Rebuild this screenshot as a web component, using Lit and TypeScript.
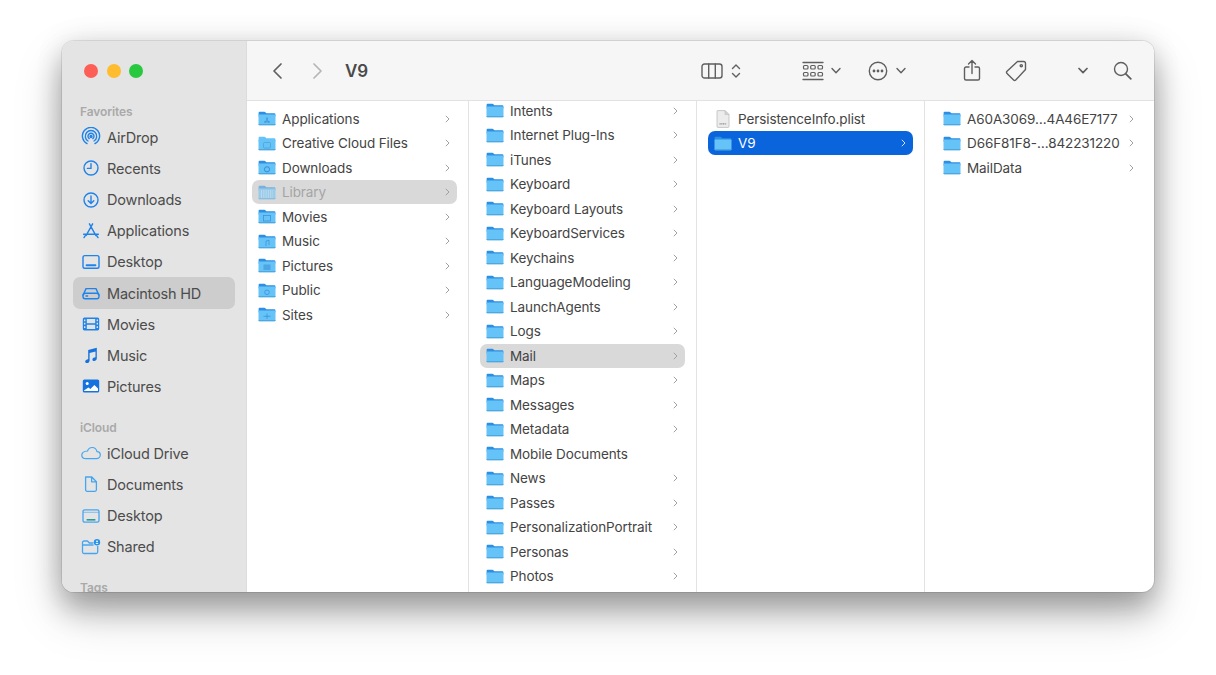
import { LitElement, html, css, svg } from "lit";
import { customElement } from "lit/decorators.js";

const B = "#1f83ea";
const si = (body: unknown) => html`<svg class="sico" viewBox="0 0 20 20" fill="none" stroke="${B}" stroke-width="1.4" stroke-linecap="round" stroke-linejoin="round">${body}</svg>`;

const sidebarIcons: Record<string, unknown> = {
  airdrop: si(svg`<path d="M6 16.6a8.6 8.6 0 1 1 8 0"/><path d="M7 14a5.7 5.7 0 1 1 6 0"/><path d="M8.2 11.6a3 3 0 1 1 3.6 0"/><circle cx="10" cy="9.5" r="1" fill="${B}"/>`),
  recents: si(svg`<circle cx="10" cy="10" r="7" /><path d="M10 5.6V10.4H6.4"/>`),
  downloads: si(svg`<circle cx="10" cy="10" r="7"/><path d="M10 6v7.4M7.2 10.8 10 13.6l2.8-2.8"/>`),
  applications: si(svg`<path d="M11.6 2.8 5.2 14.4M8.4 2.8l6.4 11.6M2.6 13.2h14.8M3 16.6l1.6-2.4M17 16.6l-1.6-2.4"/>`),
  desktop: si(svg`<rect x="2" y="3.6" width="16" height="12.6" rx="1.8"/><path d="M5.6 13.2h8.8" stroke-width="2"/>`),
  hd: si(svg`<path d="M2.2 12 5 5.6h10l2.8 6.4"/><rect x="2" y="10.2" width="16" height="5.6" rx="2.2"/><path d="M5 13h1.6"/>`),
  movies: html`<svg class="sico" viewBox="0 0 20 20"><path fill="${B}" fill-rule="evenodd" d="M3.4 3.6h13.2A1.6 1.6 0 0 1 18.2 5.2v9.6a1.6 1.6 0 0 1-1.6 1.6H3.4a1.6 1.6 0 0 1-1.6-1.6V5.2a1.6 1.6 0 0 1 1.6-1.6ZM5.8 5v4.2h8.4V5Zm0 5.8V15h8.4v-4.2ZM3 5.4v1.8h1.4V5.4Zm0 3.4v1.8h1.4V8.8Zm0 3.4V14h1.4v-1.8Zm12.6-6.8v1.8H17V5.4Zm0 3.4v1.8H17V8.8Zm0 3.4V14H17v-1.8Z"/></svg>`,
  music: html`<svg class="sico" viewBox="0 0 20 20"><path fill="#1572de" d="M7.2 5 15.8 2.8v10.8c0 1.6-1.3 2.5-2.6 2.5-1 0-1.8-.6-1.8-1.6 0-1.2 1-1.8 2-2l1.1-.3V6.4L8.6 7.9v7.6c0 1.6-1.3 2.6-2.6 2.6-1 0-1.8-.7-1.8-1.7 0-1.2 1-1.8 2-2l1-.3Z"/></svg>`,
  pictures: html`<svg class="sico" viewBox="0 0 20 20"><path fill="#1572de" d="M3.4 3.4h13.2a1.6 1.6 0 0 1 1.6 1.6v10a1.6 1.6 0 0 1-1.6 1.6H3.4A1.6 1.6 0 0 1 1.8 15V5a1.6 1.6 0 0 1 1.6-1.6Z"/><path fill="#fff" d="M3 14.6v.4h14v-2.4l-3.6-3.6-4 4-2-1.6Z"/><circle cx="6.2" cy="7.4" r="1.5" fill="#fff"/></svg>`,
  cloud: html`<svg class="sico" viewBox="0 0 20 20" fill="none" stroke="#45a5ee" stroke-width="1.2" stroke-linejoin="round"><path d="M5 15.6h10.4c2.2 0 3.9-1.6 3.9-3.5s-1.5-3.3-3.3-3.4C15.4 6 13.5 4.5 11.2 4.5 8.9 4.5 7.2 6 6.5 8 3.3 8.2.8 9.8.8 12.2c0 2 1.8 3.4 4.2 3.4Z"/></svg>`,
  docs: html`<svg class="sico" viewBox="0 0 20 20" fill="none" stroke="#45a5ee" stroke-width="1.3" stroke-linejoin="round"><path d="M4.6 3h6.2l4.6 4.8v8a1.5 1.5 0 0 1-1.5 1.5H6.1a1.5 1.5 0 0 1-1.5-1.5ZM10.6 3v4.8h4.8"/></svg>`,
  desktop2: html`<svg class="sico" viewBox="0 0 20 20" fill="none" stroke="#45a5ee" stroke-width="1.3"><rect x="2" y="3.8" width="16" height="12.4" rx="1.8"/><path d="M2.5 6.4h15" stroke-dasharray="1 1"/><path d="M5.6 13.8h8.8" stroke="#2c9a8f" stroke-width="1.6"/></svg>`,
  shared: html`<svg class="sico" viewBox="0 0 20 20" fill="none" stroke="#45a5ee" stroke-width="1.3" stroke-linejoin="round"><path d="M1.5 5.6V15a1.5 1.5 0 0 0 1.5 1.5h12.2a1.5 1.5 0 0 0 1.5-1.5V9M1.5 8h11M1.5 5.6a1.6 1.6 0 0 1 1.6-1.6h3.4l1.8 2h4"/><circle cx="16" cy="5.2" r="3.2" fill="#2a93e8" stroke="none"/><circle cx="16" cy="4.3" r=".9" fill="#fff" stroke="none"/><path d="M14.5 7a1.6 1.6 0 0 1 3 0Z" fill="#fff" stroke="none"/></svg>`,
};

type SB = { n: string; i: string; sel?: boolean };
const favorites: SB[] = [
  { n: "AirDrop", i: "airdrop" }, { n: "Recents", i: "recents" }, { n: "Downloads", i: "downloads" },
  { n: "Applications", i: "applications" }, { n: "Desktop", i: "desktop" }, { n: "Macintosh HD", i: "hd", sel: true },
  { n: "Movies", i: "movies" }, { n: "Music", i: "music" }, { n: "Pictures", i: "pictures" },
];
const icloud: SB[] = [
  { n: "iCloud Drive", i: "cloud" }, { n: "Documents", i: "docs" }, { n: "Desktop", i: "desktop2" }, { n: "Shared", i: "shared" },
];

const glyphs: Record<string, unknown> = {
  a: svg`<path d="M9.8 6.5 7 12M8.2 6.5 11 12M6 10.8h6" fill="none" stroke="#3c92d6" stroke-width=".8"/>`,
  c: svg`<rect x="5.5" y="6.5" width="7" height="5.5" rx="1" fill="none" stroke="#4fa0d8" stroke-width=".8"/>`,
  d: svg`<circle cx="9" cy="9.3" r="2.6" fill="none" stroke="#2f86cc" stroke-width=".9"/>`,
  l: svg`<path d="M3 6h12M3 8h12M3 10h12M3 12h12" stroke="#fff" stroke-width=".8" stroke-dasharray="1 1.3"/>`,
  m: svg`<rect x="5.5" y="6.5" width="7" height="5.5" fill="none" stroke="#3c92d6" stroke-width=".8"/>`,
  n: svg`<path d="M8 12V7l3-.7V11" fill="none" stroke="#3c92d6" stroke-width=".8"/>`,
  p: svg`<rect x="5.5" y="6.5" width="7" height="5.5" fill="#3c92d6" opacity=".6"/>`,
  u: svg`<circle cx="9" cy="9.3" r="2.3" fill="none" stroke="#3c92d6" stroke-width=".8"/>`,
  s: svg`<path d="M5.5 9.3h7M9 6.5v5.5" stroke="#3c92d6" stroke-width=".8"/>`,
};

const folder = (g?: string, faded = false) => html`<svg class="folder ${faded ? "faded" : ""}" viewBox="0 0 18 15">
  <path fill="${g === "c" ? "#66c3f8" : "#2d8fe3"}" d="M1.5.8h4.8c.6 0 .9.2 1.3.6l.9.9h8c.5 0 .9.4.9.9v2.200H.6V1.700c0-.5.4-.9.9-.9Z"/>
  <path fill="#66c3f8" d="M1.3 3.400h15.400c.5 0 .8.3.8.8v9c0 .6-.4 1-1 1H1.500c-.6 0-1-.4-1-1v-9c0-.5.3-.8.8-.8Z"/>
  <path fill="#4fa7dc" d="M.5 12.900h17v.4c0 .6-.4.9-1 .9H1.500c-.6 0-1-.3-1-.9Z"/>
  ${g ? glyphs[g] : ""}
</svg>`;

const fileIcon = html`<svg class="folder file" viewBox="0 0 18 18" fill="none">
  <path fill="#ececec" stroke="#bdbdbd" stroke-width=".8" d="M3.500.6H11l4 4v12c0 .5-.3.8-.8.8H3.800c-.5 0-.8-.3-.8-.8V1.100c0-.3.2-.5.5-.5Z"/>
  <path fill="#d4d4d4" stroke="#bdbdbd" stroke-width=".6" d="M11 .6v4h4Z"/>
  <path stroke="#8f8f8f" stroke-width="1.2" stroke-dasharray="1.2 .5" d="M5.500 13.800h7"/>
</svg>`;

type Row = { n: string; g?: string; chev?: boolean; sel?: "gray" | "blue"; faded?: boolean; file?: boolean };
const col1: Row[] = [
  { n: "Applications", g: "a" }, { n: "Creative Cloud Files", g: "c" }, { n: "Downloads", g: "d" },
  { n: "Library", g: "l", sel: "gray", faded: true }, { n: "Movies", g: "m" }, { n: "Music", g: "n" },
  { n: "Pictures", g: "p" }, { n: "Public", g: "u" }, { n: "Sites", g: "s" },
].map((r) => ({ ...r, chev: true })) as Row[];
const col2: Row[] = [
  "Intents", "Internet Plug-Ins", "iTunes", "Keyboard", "Keyboard Layouts", "KeyboardServices", "Keychains",
  "LanguageModeling", "LaunchAgents", "Logs", "Mail", "Maps", "Messages", "Metadata", "Mobile Documents", "News",
  "Passes", "PersonalizationPortrait", "Personas", "Photos",
].map((n) => ({ n, chev: n !== "Mobile Documents", sel: n === "Mail" ? ("gray" as const) : undefined }));
const col3: Row[] = [{ n: "PersistenceInfo.plist", file: true }, { n: "V9", chev: true, sel: "blue" }];
const col4: Row[] = [
  { n: "A60A3069\u20264A46E7177", chev: true }, { n: "D66F81F8-\u2026842231220", chev: true }, { n: "MailData", chev: true },
];

const tb = (w: number, h: number, body: unknown) => html`<svg class="tbi" width="${w}" height="${h}" viewBox="0 0 ${w} ${h}" fill="none" stroke="#5f5f5f" stroke-width="1.4" stroke-linecap="round" stroke-linejoin="round">${body}</svg>`;
const gap = (n: number) => html`<span class="tgap" style="width:${n}px"></span>`;
const down = (sw = 1.4) => tb(10, 8, svg`<path d="M1 1.5 5 5.7 9 1.5" stroke-width="${sw}"/>`);

@customElement("app-root")
export class AppRoot extends LitElement {
  static styles = css`
    :host { display: block; width: 1216px; height: 675px; background: #fff; padding: 41px 62px 0; box-sizing: border-box; overflow: hidden;
      font-family: Inter, "Liberation Sans", sans-serif; }
    .window { width: 1092px; height: 551px; border-radius: 12px; display: flex; overflow: hidden; background: #fff;
      box-shadow: 0 0 0 1px rgba(0,0,0,.09), 0 0 28px rgba(0,0,0,.1), 0 18px 28px rgba(0,0,0,.24), 0 22px 50px rgba(0,0,0,.18); }
    .sidebar { width: 185px; flex: none; background: #e4e4e4; border-right: 1px solid #dcdcdc; box-sizing: border-box; padding: 23px 11px 0; overflow: hidden; }
    .lights { display: flex; gap: 8.5px; padding-left: 11px; height: 15px; margin-bottom: 25px; }
    .lights i { width: 14px; height: 14px; border-radius: 50%; display: block; }
    .red { background: #fd5f57; }
    .yellow { background: #febc2e; }
    .green { background: #28c83f; }
    .slabel { font-size: 12px; font-weight: 600; color: #a9a9a9; height: 15px; line-height: 15px; padding-left: 7px; letter-spacing: -.1px; }
    .slabel.gap { margin-top: 18px; }
    .slist { display: flex; flex-direction: column; margin-top: 2.75px; }
    .sitem { height: 31.15px; display: flex; align-items: center; border-radius: 7px; padding-left: 8px; font-size: 14.5px; color: #4c4c4c; letter-spacing: -.2px; }
    .sitem.sel { background: #cdcdcd; }
    .sico { width: 20px; height: 20px; margin-right: 6px; flex: none; }
    .main { flex: 1; min-width: 0; display: flex; flex-direction: column; }
    .toolbar { height: 60px; flex: none; background: #f6f6f6; border-bottom: 1px solid #e2e2e2; box-sizing: border-box; display: flex; align-items: center; padding-left: 24px; }
    .title { font-size: 17px; font-weight: 600; color: #4a4a4a; margin-left: 21px; width: 356px; letter-spacing: -.2px; }
    .tbi { flex: none; display: block; }
    .tgap { flex: none; display: block; }
    .cols { flex: 1; min-height: 0; display: flex; }
    .col { flex: none; border-right: 1px solid #e3e3e3; box-sizing: border-box; padding: 5.4px 11px 0; overflow: hidden; }
    .col.w1 { width: 222px; padding-left: 5px; }
    .col.w2 { width: 228px; padding-top: 0; }
    .col.w2 .rows { margin-top: -2.5px; }
    .col.w3 { width: 228px; }
    .col.w4 { width: 229px; border-right: 0; padding-left: 12px; padding-right: 13px; }
    .row { height: 24.5px; display: flex; align-items: center; border-radius: 7px; padding-left: 6px; font-size: 13.5px; color: #444; letter-spacing: -.1px; white-space: nowrap; }
    .row.gray { background: #d9d9d9; }
    .row.blue { background: #0a64dc; color: #fff; }
    .row.faded-text { color: #a5a5a5; }
    .folder { width: 18px; height: 15px; flex: none; margin-right: 6px; }
    .folder.faded { opacity: .55; }
    .folder.file { height: 18px; }
    .name { flex: 1; min-width: 0; }
    .chev { width: 5px; height: 8px; flex: none; margin-right: 7px; }
    .chev path { stroke: #a0a0a0; }
    .row.blue .chev path { stroke: #cfe0fa; }
  `;

  private side(items: SB[]) {
    return html`<div class="slist">${items.map((s) => html`<div class="sitem ${s.sel ? "sel" : ""}">${sidebarIcons[s.i]}<span>${s.n}</span></div>`)}</div>`;
  }

  private col(rows: Row[], cls: string) {
    return html`<div class="col ${cls}"><div class="rows">${rows.map((r) => html`
      <div class="row ${r.sel ?? ""} ${r.faded ? "faded-text" : ""}">
        ${r.file ? fileIcon : folder(r.g, r.faded)}
        <span class="name">${r.n}</span>
        ${r.chev ? html`<svg class="chev" viewBox="0 0 6 9" fill="none"><path d="M1.3 1 4.8 4.5 1.3 8" stroke-width="1.2" stroke-linecap="round" stroke-linejoin="round"/></svg>` : ""}
      </div>`)}</div></div>`;
  }

  render() {
    return html`<div class="window">
      <aside class="sidebar">
        <div class="lights"><i class="red"></i><i class="yellow"></i><i class="green"></i></div>
        <div class="slabel">Favorites</div>
        ${this.side(favorites)}
        <div class="slabel gap">iCloud</div>
        ${this.side(icloud)}
        <div class="slabel gap">Tags</div>
      </aside>
      <div class="main">
        <header class="toolbar">
          ${tb(12, 18, svg`<path d="M10 2 3 9l7 7" stroke-width="1.7"/>`)}
          ${gap(29)}
          ${tb(12, 18, svg`<path d="M2 2l7 7-7 7" stroke="#b5b5b5" stroke-width="1.7"/>`)}
          <div class="title">V9</div>
          ${tb(22, 16, svg`<rect x="1" y="1" width="20" height="14" rx="2.5"/><path d="M7.7 1v14M14.3 1v14"/>`)}
          ${gap(8)}
          ${tb(10, 16, svg`<path d="M1.5 5.5 5 2l3.5 3.5M1.5 10.5 5 14l3.5-3.5"/>`)}
          ${gap(61)}
          ${tb(22, 20, svg`<path d="M1 1.5h20M1 18.500h20" stroke-width="1.3"/><g stroke-width="1.2"><rect x="1.5" y="4.500" width="4.500" height="3.500" rx="1"/><rect x="8.700" y="4.500" width="4.500" height="3.500" rx="1"/><rect x="16" y="4.500" width="4.500" height="3.500" rx="1"/><rect x="1.500" y="11.500" width="4.500" height="3.500" rx="1"/><rect x="8.700" y="11.500" width="4.500" height="3.500" rx="1"/><rect x="16" y="11.500" width="4.500" height="3.500" rx="1"/></g>`)}
          ${gap(7)}
          ${down()}
          ${gap(27)}
          ${tb(20, 20, svg`<circle cx="10" cy="10" r="8.7"/><circle cx="6" cy="10" r=".7" fill="#5f5f5f"/><circle cx="10" cy="10" r=".7" fill="#5f5f5f"/><circle cx="14" cy="10" r=".7" fill="#5f5f5f"/>`)}
          ${gap(8)}
          ${down()}
          ${gap(57)}
          ${tb(18, 23, svg`<path d="M6 8H3a1.5 1.5 0 0 0-1.5 1.5v10A1.5 1.5 0 0 0 3 21h12a1.5 1.5 0 0 0 1.5-1.5v-10A1.5 1.5 0 0 0 15 8h-3M9 14.500V1.500M5.500 5 9 1.500 12.500 5"/>`)}
          ${gap(24)}
          ${tb(22, 22, svg`<path d="M12.500 1.500h6.300a1.700 1.700 0 0 1 1.700 1.700v6.300L10.700 20a1.500 1.500 0 0 1-2.100 0L2 13.400a1.500 1.500 0 0 1 0-2.100Z"/><circle cx="16.300" cy="5.700" r="1.100"/>`)}
          ${gap(51)}
          ${down(1.7)}
          ${gap(25)}
          ${tb(19, 19, svg`<circle cx="8" cy="8" r="6.500"/><path d="m12.800 12.800 5 5" stroke-width="1.8"/>`)}
        </header>
        <div class="cols">
          ${this.col(col1, "w1")}${this.col(col2, "w2")}${this.col(col3, "w3")}${this.col(col4, "w4")}
        </div>
      </div>
    </div>`;
  }
}
